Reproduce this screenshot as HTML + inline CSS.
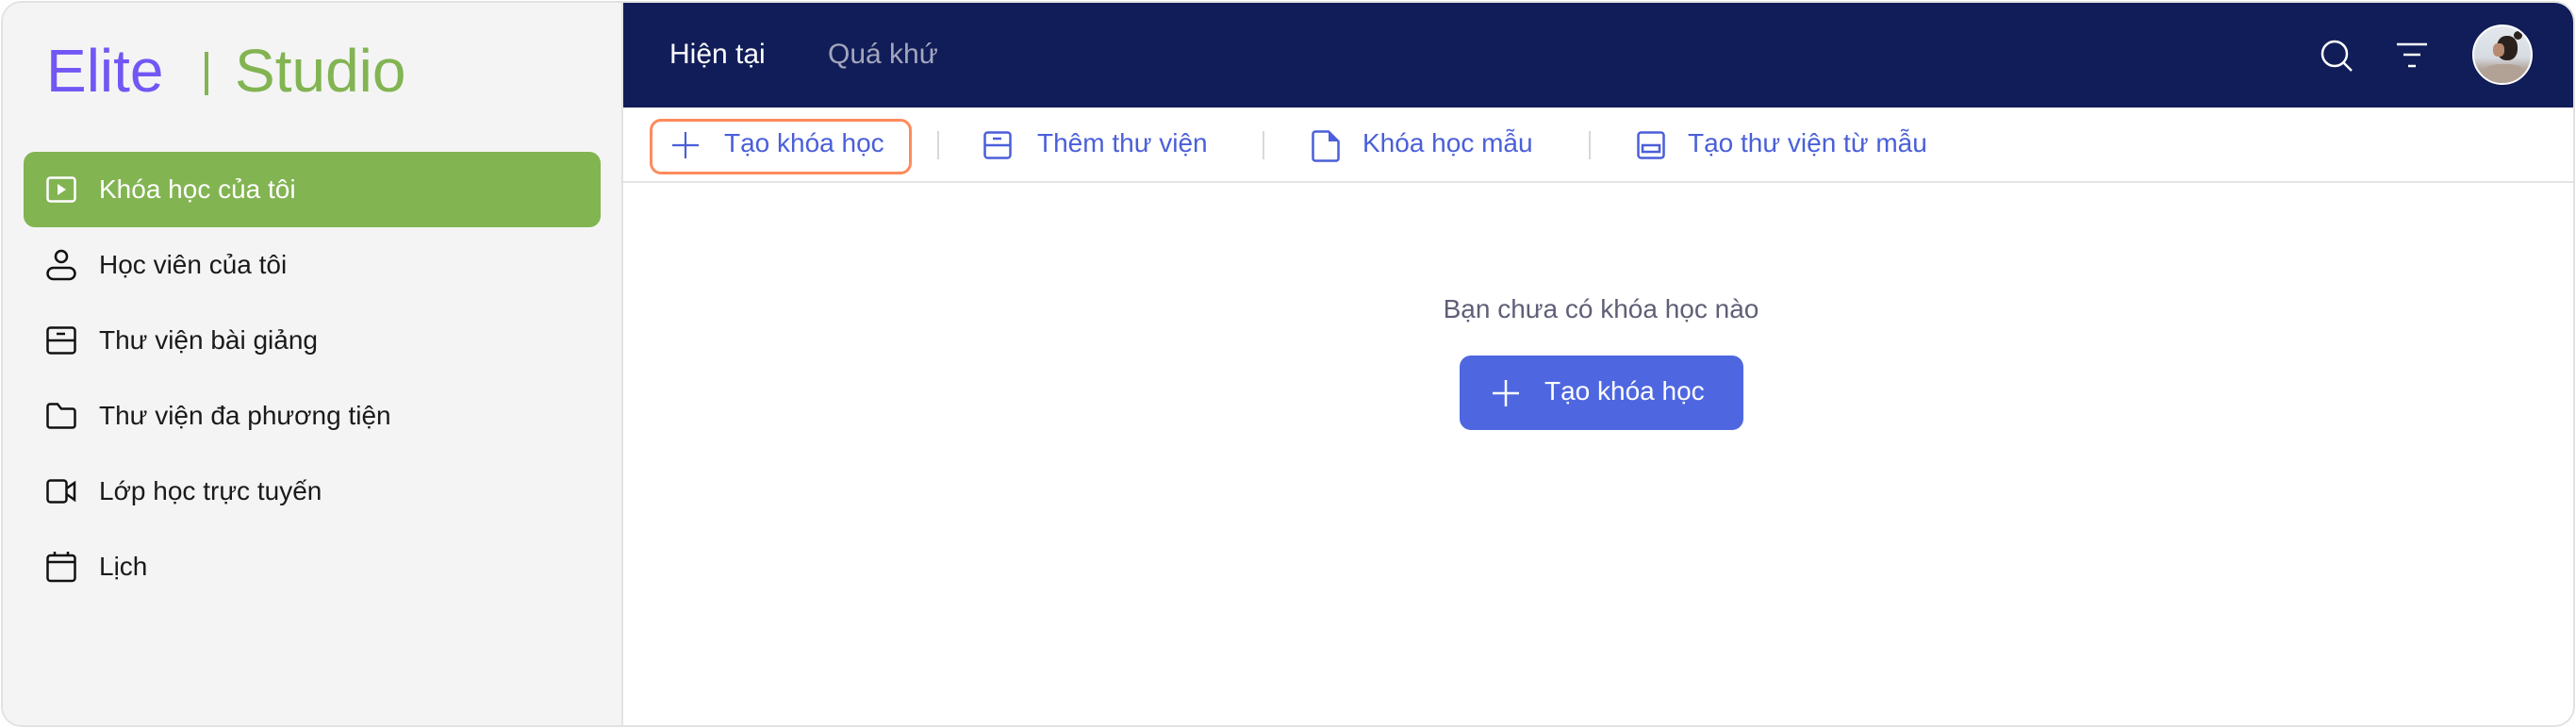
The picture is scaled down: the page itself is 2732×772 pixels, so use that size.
<!DOCTYPE html>
<html><head><meta charset="utf-8"><style>
*{margin:0;padding:0;box-sizing:border-box}
body{width:2732px;height:772px;background:#fff;font-family:"Liberation Sans",sans-serif;position:relative;overflow:hidden}
.frame{position:absolute;left:1px;top:1px;width:2730px;height:770px;border:2px solid #e2e2e2;border-radius:22px;overflow:hidden;background:#fff}
.side{position:absolute;left:0;top:0;width:658px;height:100%;background:#f4f4f4;border-right:2px solid #e2e2e2}
.logo{position:absolute;left:46px;top:40px;font-size:64px;white-space:nowrap;line-height:1}
.logo .e{color:#7257f5}
.logo .bar{position:absolute;left:168px;top:12px;width:4px;height:46px;background:#82b452}
.logo .s{color:#82b452;position:absolute;left:200px;top:0}
.item{position:absolute;left:22px;width:612px;height:80px;font-size:28px;color:#1a1a1a;display:flex;align-items:center}
.item svg{position:absolute;left:24px}
.item span{position:absolute;left:80px}
.item.act{background:#82b452;border-radius:12px;color:#fff}
.head{position:absolute;left:658px;top:0;right:0;height:111px;background:#111d58}
.tab{position:absolute;top:38px;font-size:30px}
.tool{position:absolute;left:658px;top:111px;right:0;height:80px;border-bottom:2px solid #e4e4e4}
.tb{position:absolute;font-size:28px;color:#4a5fd9;top:22px;white-space:nowrap}
.sep{position:absolute;top:25px;width:2px;height:30px;background:#d8d8d8}
.empty{position:absolute;left:1400px;width:590px;text-align:center;top:309px;font-size:28px;color:#5f5f78}
.btn{position:absolute;left:1545px;top:374px;width:301px;height:79px;background:#4e67e0;border-radius:12px;color:#fff;font-size:28px}
</style></head><body>
<div class="frame">
<div class="side">
 <div class="logo"><span class="e">Elite</span><div class="bar"></div><span class="s">Studio</span></div>
 <div class="item act" style="top:158px"><svg width="32" height="28" viewBox="0 0 32 28"><rect x="1.5" y="1.5" width="29" height="25" rx="3" fill="none" stroke="#fff" stroke-width="2.5"/><path d="M12 8 L21 14 L12 20Z" fill="#fff"/></svg><span>Khóa học của tôi</span></div>
 <div class="item" style="top:238px"><svg width="32" height="34" viewBox="0 0 32 34"><circle cx="16" cy="8" r="6" fill="none" stroke="#111" stroke-width="2.5"/><rect x="1.5" y="20" width="29" height="12" rx="6" fill="none" stroke="#111" stroke-width="2.5"/></svg><span>Học viên của tôi</span></div>
 <div class="item" style="top:318px"><svg width="32" height="30" viewBox="0 0 32 30"><rect x="1.5" y="1.5" width="29" height="27" rx="3" fill="none" stroke="#111" stroke-width="2.5"/><path d="M1.5 15H30.5M11 8H20" stroke="#111" stroke-width="2.5"/></svg><span>Thư viện bài giảng</span></div>
 <div class="item" style="top:398px"><svg width="32" height="28" viewBox="0 0 32 28"><path d="M1.5 4a2.5 2.5 0 0 1 2.5-2.5h8l4 5h12a2.5 2.5 0 0 1 2.5 2.5v15a2.5 2.5 0 0 1-2.5 2.5H4a2.5 2.5 0 0 1-2.5-2.5Z" fill="none" stroke="#111" stroke-width="2.5"/></svg><span>Thư viện đa phương tiện</span></div>
 <div class="item" style="top:478px"><svg width="32" height="26" viewBox="0 0 32 26"><rect x="1.5" y="1.5" width="20" height="23" rx="3" fill="none" stroke="#111" stroke-width="2.5"/><path d="M21.5 10L30 4V22L21.5 16" fill="none" stroke="#111" stroke-width="2.5"/></svg><span>Lớp học trực tuyến</span></div>
 <div class="item" style="top:558px"><svg width="32" height="34" viewBox="0 0 32 34"><rect x="1.5" y="5" width="29" height="27" rx="3" fill="none" stroke="#111" stroke-width="2.5"/><path d="M1.5 12H30.5M9 1V6M23 1V6" stroke="#111" stroke-width="2.5"/></svg><span>Lịch</span></div>
</div>
<div class="head">
 <div class="tab" style="left:49px;color:#fff">Hiện tại</div>
 <div class="tab" style="left:217px;color:#a3a6bd">Quá khứ</div>
 <svg style="position:absolute;left:1800px;top:39px" width="36" height="36" viewBox="0 0 36 36"><circle cx="15" cy="15" r="13" fill="none" stroke="#fff" stroke-width="2.5"/><path d="M24 24L33 33" stroke="#fff" stroke-width="2.5"/></svg>
 <svg style="position:absolute;left:1880px;top:42px" width="34" height="28" viewBox="0 0 34 28"><path d="M1 2H33M8 13H26M13 25H21" stroke="#fff" stroke-width="2.5"/></svg>
 <div style="position:absolute;left:1961px;top:23px;width:64px;height:64px;border-radius:50%;border:2px solid #fff;background:linear-gradient(180deg,#e4e8ee 0%,#d6dbe2 55%,#b3a69c 75%,#9a8b80 100%);overflow:hidden"><div style="position:absolute;left:24px;top:10px;width:22px;height:26px;border-radius:45%;background:#2b211c"></div><div style="position:absolute;left:42px;top:5px;width:9px;height:9px;border-radius:50%;background:#2b211c"></div><div style="position:absolute;left:20px;top:18px;width:12px;height:14px;border-radius:40%;background:#b88a70"></div><div style="position:absolute;left:8px;top:40px;width:48px;height:30px;border-radius:40% 40% 0 0;background:#b2a296"></div></div>
</div>
<div class="tool">
 <div style="position:absolute;left:28px;top:12px;width:278px;height:59px;border:3px solid #ff8a5b;border-radius:12px"></div>
 <svg style="position:absolute;left:51px;top:25px" width="30" height="30" viewBox="0 0 30 30"><path d="M15 1V29M1 15H29" stroke="#4a5fd9" stroke-width="2.2"/></svg>
 <div class="tb" style="left:107px">Tạo khóa học</div>
 <div class="sep" style="left:333px"></div>
 <svg style="position:absolute;left:382px;top:25px" width="30" height="30" viewBox="0 0 30 30"><rect x="1.5" y="1.5" width="27" height="27" rx="3" fill="none" stroke="#4a5fd9" stroke-width="2.5"/><path d="M1.5 15H28.5M10 8H19" stroke="#4a5fd9" stroke-width="2.5"/></svg>
 <div class="tb" style="left:439px">Thêm thư viện</div>
 <div class="sep" style="left:678px"></div>
 <svg style="position:absolute;left:730px;top:24px" width="30" height="34" viewBox="0 0 30 34"><path d="M4 1.5H18L28.5 12V30a2.5 2.5 0 0 1-2.5 2.5H4A2.5 2.5 0 0 1 1.5 30V4A2.5 2.5 0 0 1 4 1.5Z" fill="none" stroke="#4a5fd9" stroke-width="2.5"/><path d="M18 2V12H28Z" fill="#4a5fd9"/></svg>
 <div class="tb" style="left:784px">Khóa học mẫu</div>
 <div class="sep" style="left:1024px"></div>
 <svg style="position:absolute;left:1075px;top:25px" width="30" height="30" viewBox="0 0 30 30"><rect x="1.5" y="1.5" width="27" height="27" rx="3" fill="none" stroke="#4a5fd9" stroke-width="2.5"/><rect x="6" y="15" width="18" height="7" fill="none" stroke="#4a5fd9" stroke-width="2.5"/></svg>
 <div class="tb" style="left:1129px">Tạo thư viện từ mẫu</div>
</div>
<div class="empty">Bạn chưa có khóa học nào</div>
<div class="btn"><svg style="position:absolute;left:34px;top:25px" width="30" height="30" viewBox="0 0 30 30"><path d="M15 1V29M1 15H29" stroke="#fff" stroke-width="2.5"/></svg><span style="position:absolute;left:90px;top:22px">Tạo khóa học</span></div>
</div>
</body></html>
